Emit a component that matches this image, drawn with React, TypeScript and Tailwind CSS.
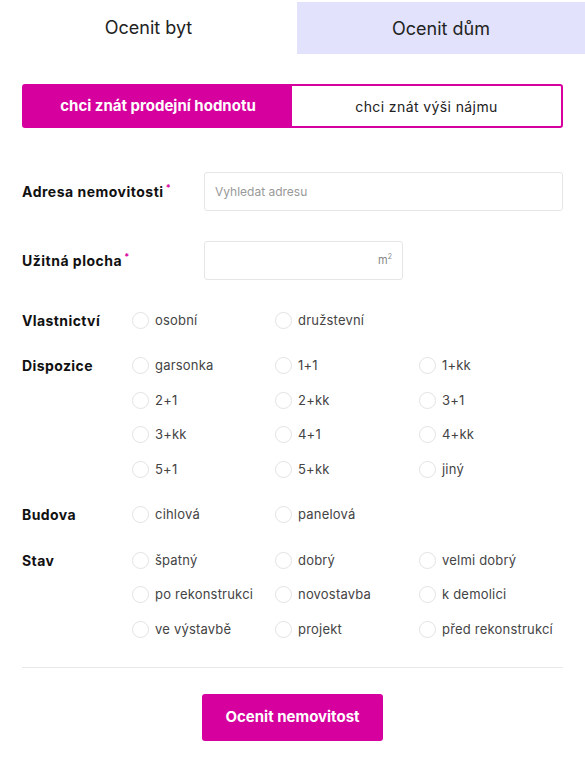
import { useState } from "react";

const PINK = "bg-[#d6009e]";

type Group = { label: string; name: string; options: string[] };

const GROUPS: Group[] = [
  { label: "Vlastnictví", name: "own", options: ["osobní", "družstevní"] },
  {
    label: "Dispozice",
    name: "disp",
    options: ["garsonka", "1+1", "1+kk", "2+1", "2+kk", "3+1", "3+kk", "4+1", "4+kk", "5+1", "5+kk", "jiný"],
  },
  { label: "Budova", name: "bud", options: ["cihlová", "panelová"] },
  {
    label: "Stav",
    name: "stav",
    options: [
      "špatný",
      "dobrý",
      "velmi dobrý",
      "po rekonstrukci",
      "novostavba",
      "k demolici",
      "ve výstavbě",
      "projekt",
      "před rekonstrukcí",
    ],
  },
];

function RadioGroup({ group, value, onChange }: { group: Group; value: string; onChange: (v: string) => void }) {
  return (
    <div className="flex">
      <div className="flex h-[34.5px] w-[110px] items-center text-[14px] font-bold tracking-[0.4px] text-[#111]">
        {group.label}
      </div>
      <div className="grid flex-1 grid-cols-[143px_144px_1fr]">
        {group.options.map((o) => (
          <label key={o} className="flex h-[34.5px] cursor-pointer items-center">
            <input
              type="radio"
              name={group.name}
              checked={value === o}
              onChange={() => onChange(o)}
              className="sr-only"
            />
            <span
              className={
                "h-[17px] w-[17px] shrink-0 rounded-full border " +
                (value === o ? "border-[5px] border-[#d6009e]" : "border-[#e3e3e3]")
              }
            />
            <span className="ml-[6px] whitespace-nowrap text-[13px] tracking-[0.2px] text-[#444]">{o}</span>
          </label>
        ))}
      </div>
    </div>
  );
}

export default function App() {
  const [tab, setTab] = useState<"byt" | "dum">("byt");
  const [mode, setMode] = useState<"prodej" | "najem">("prodej");
  const [values, setValues] = useState<Record<string, string>>({});

  return (
    <div className="w-[585px] bg-white pb-[30px] font-['Inter',sans-serif] text-[#222]">
      <div className="flex h-[54px]">
        <button
          onClick={() => setTab("byt")}
          className={
            "flex w-[297px] items-center justify-center text-[18px] text-[#222] " +
            (tab === "byt" ? "" : "bg-[#e2e2fc]")
          }
        >
          Ocenit byt
        </button>
        <button
          onClick={() => setTab("dum")}
          className={
            "mt-[2px] flex flex-1 items-center justify-center text-[18px] text-[#222] " +
            (tab === "byt" ? "bg-[#e2e2fc]" : "")
          }
        >
          Ocenit dům
        </button>
      </div>

      <div className="px-[22px]">
        <div className="mt-[30px] flex h-[44px] rounded-[3px] border-2 border-[#d6009e]">
          <button
            onClick={() => setMode("prodej")}
            className={
              "flex w-[268px] items-center justify-center text-[15px] " +
              (mode === "prodej" ? PINK + " font-bold text-white" : "text-[#222]")
            }
          >
            chci znát prodejní hodnotu
          </button>
          <button
            onClick={() => setMode("najem")}
            className={
              "flex flex-1 items-center justify-center text-[14px] tracking-[0.4px] " +
              (mode === "najem" ? PINK + " font-bold text-white" : "text-[#222]")
            }
          >
            chci znát výši nájmu
          </button>
        </div>

        <div className="mt-[44px] flex items-center">
          <div className="w-[182px] text-[14px] font-bold tracking-[0.5px] text-[#111]">
            Adresa nemovitosti<span className="ml-[2px] align-top text-[9px] text-[#d6009e]">*</span>
          </div>
          <input
            placeholder="Vyhledat adresu"
            className="h-[39px] flex-1 rounded-[3px] border border-[#e6e6e6] px-[10px] text-[12px] outline-none placeholder:text-[#999]"
          />
        </div>

        <div className="mt-[30px] flex items-center">
          <div className="w-[182px] text-[14px] font-bold tracking-[0.5px] text-[#111]">
            Užitná plocha<span className="ml-[2px] align-top text-[9px] text-[#d6009e]">*</span>
          </div>
          <div className="flex h-[39px] w-[199px] items-center justify-end rounded-[3px] border border-[#e6e6e6] px-[10px] text-[11px] text-[#888]">
            m<sup className="text-[7px]">2</sup>
          </div>
        </div>

        <div className="mt-[23px] flex flex-col gap-[11px]">
          {GROUPS.map((g) => (
            <RadioGroup
              key={g.name}
              group={g}
              value={values[g.name] ?? ""}
              onChange={(v) => setValues({ ...values, [g.name]: v })}
            />
          ))}
        </div>

        <div className="mt-[20px] h-px bg-[#e8e8e8]" />

        <div className="mt-[26px] flex justify-center">
          <button className={"h-[47px] w-[181px] rounded-[3px] text-[15px] font-bold text-white " + PINK}>
            Ocenit nemovitost
          </button>
        </div>
      </div>
    </div>
  );
}
